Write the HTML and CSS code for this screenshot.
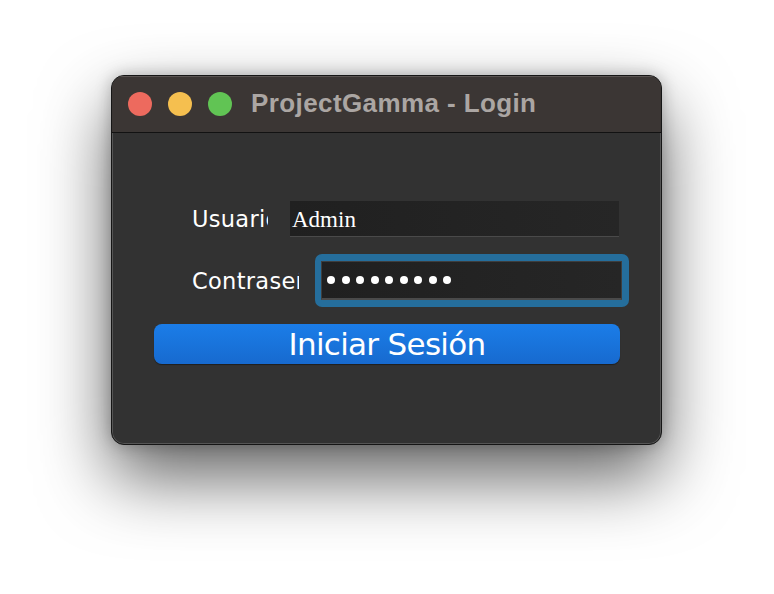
FILE: index.html
```html
<!DOCTYPE html>
<html lang="es">
<head>
<meta charset="utf-8">
<title>ProjectGamma - Login</title>
<link rel="stylesheet" href="styles.css">
</head>
<body>
<div class="window">
  <div class="titlebar">
    <span class="light red"></span>
    <span class="light yellow"></span>
    <span class="light green"></span>
    <span class="title">ProjectGamma - Login</span>
  </div>
  <div class="content">
    <div class="row row-user">
      <span class="label label-user">Usuario</span>
      <div class="field field-user">Admin</div>
    </div>
    <div class="row row-pass">
      <span class="label label-pass">Contraseña</span>
      <div class="focus-ring">
        <div class="field field-pass">
          <span class="dot"></span><span class="dot"></span><span class="dot"></span>
          <span class="dot"></span><span class="dot"></span><span class="dot"></span>
          <span class="dot"></span><span class="dot"></span><span class="dot"></span>
        </div>
      </div>
    </div>
    <button class="btn">Iniciar Sesión</button>
  </div>
</div>
</body>
</html>
```
FILE: styles.css
```css
html, body {
  margin: 0;
  padding: 0;
  background: #ffffff;
}
body {
  padding: 75px 0 0 111px;
  height: 594px;
  box-sizing: border-box;
  overflow: hidden;
}
.window {
  width: 551px;
  height: 370px;
  box-sizing: border-box;
  border-radius: 13px;
  background: #323232;
  border: 1px solid #161616;
  box-shadow: inset 0 0 0 1px #555555, 0 32px 70px rgba(0,0,0,0.62), 0 0 16px rgba(0,0,0,0.25);
  overflow: hidden;
  display: flex;
  flex-direction: column;
}
.titlebar {
  height: 57px;
  flex: none;
  background: #3b3634;
  border-bottom: 1px solid #121212;
  box-shadow: inset 0 1px 0 #5a5452;
  display: flex;
  align-items: center;
  padding-left: 16px;
  padding-bottom: 1px;
  box-sizing: border-box;
}
.light {
  width: 24px;
  height: 24px;
  border-radius: 50%;
  margin-right: 16px;
  flex: none;
}
.red { background: #ed6a5e; }
.yellow { background: #f5bf4f; }
.green { background: #61c454; }
.title {
  margin-left: 3px;
  font-family: "Liberation Sans", sans-serif;
  font-weight: 700;
  font-size: 26px;
  letter-spacing: 0.4px;
  color: #aba6a3;
}
.content {
  flex: 1;
  display: flex;
  flex-direction: column;
  padding: 68px 0 0 0;
}
.row {
  display: flex;
  align-items: center;
  padding-left: 80px;
}
.label {
  font-family: "DejaVu Sans", sans-serif;
  font-size: 22.5px;
  color: #ffffff;
  white-space: nowrap;
  overflow: hidden;
  flex: none;
  letter-spacing: 0.3px;
}
.label-user { width: 76px; }
.label-pass { width: 107px; }
.field {
  background: linear-gradient(90deg, #202020, #262626);
  box-sizing: border-box;
}
.field-user {
  margin-left: 22px;
  width: 329px;
  height: 36px;
  border-bottom: 1px solid #4a4a4a;
  font-family: "Liberation Serif", serif;
  font-size: 23px;
  color: #ffffff;
  padding-left: 2px;
  line-height: 37px;
}
.row-pass {
  margin-top: 17px;
}
.focus-ring {
  margin-left: 16px;
  width: 314px;
  height: 53px;
  box-sizing: border-box;
  border-radius: 7px;
  background: #256e9c;
  padding: 7px 7px 7px 6px;
}
.field-pass {
  width: 100%;
  height: 100%;
  border: 1px solid #3e3e3e;
  border-bottom: 2px solid #4a4a4a;
  display: flex;
  align-items: center;
  gap: 6.5px;
  padding-left: 5px;
}
.dot {
  width: 8px;
  height: 8px;
  border-radius: 50%;
  background: #ffffff;
  flex: none;
}
.btn {
  margin: 17px 0 0 42px;
  width: 466px;
  height: 40px;
  border: none;
  border-radius: 8px;
  background: linear-gradient(180deg, #1b7de8, #176acf);
  box-shadow: 0 1px 1px rgba(0,0,0,0.4);
  color: #ffffff;
  font-family: "DejaVu Sans", sans-serif;
  font-size: 31px;
  letter-spacing: -0.7px;
  padding: 0;
  line-height: 40px;
}
```
